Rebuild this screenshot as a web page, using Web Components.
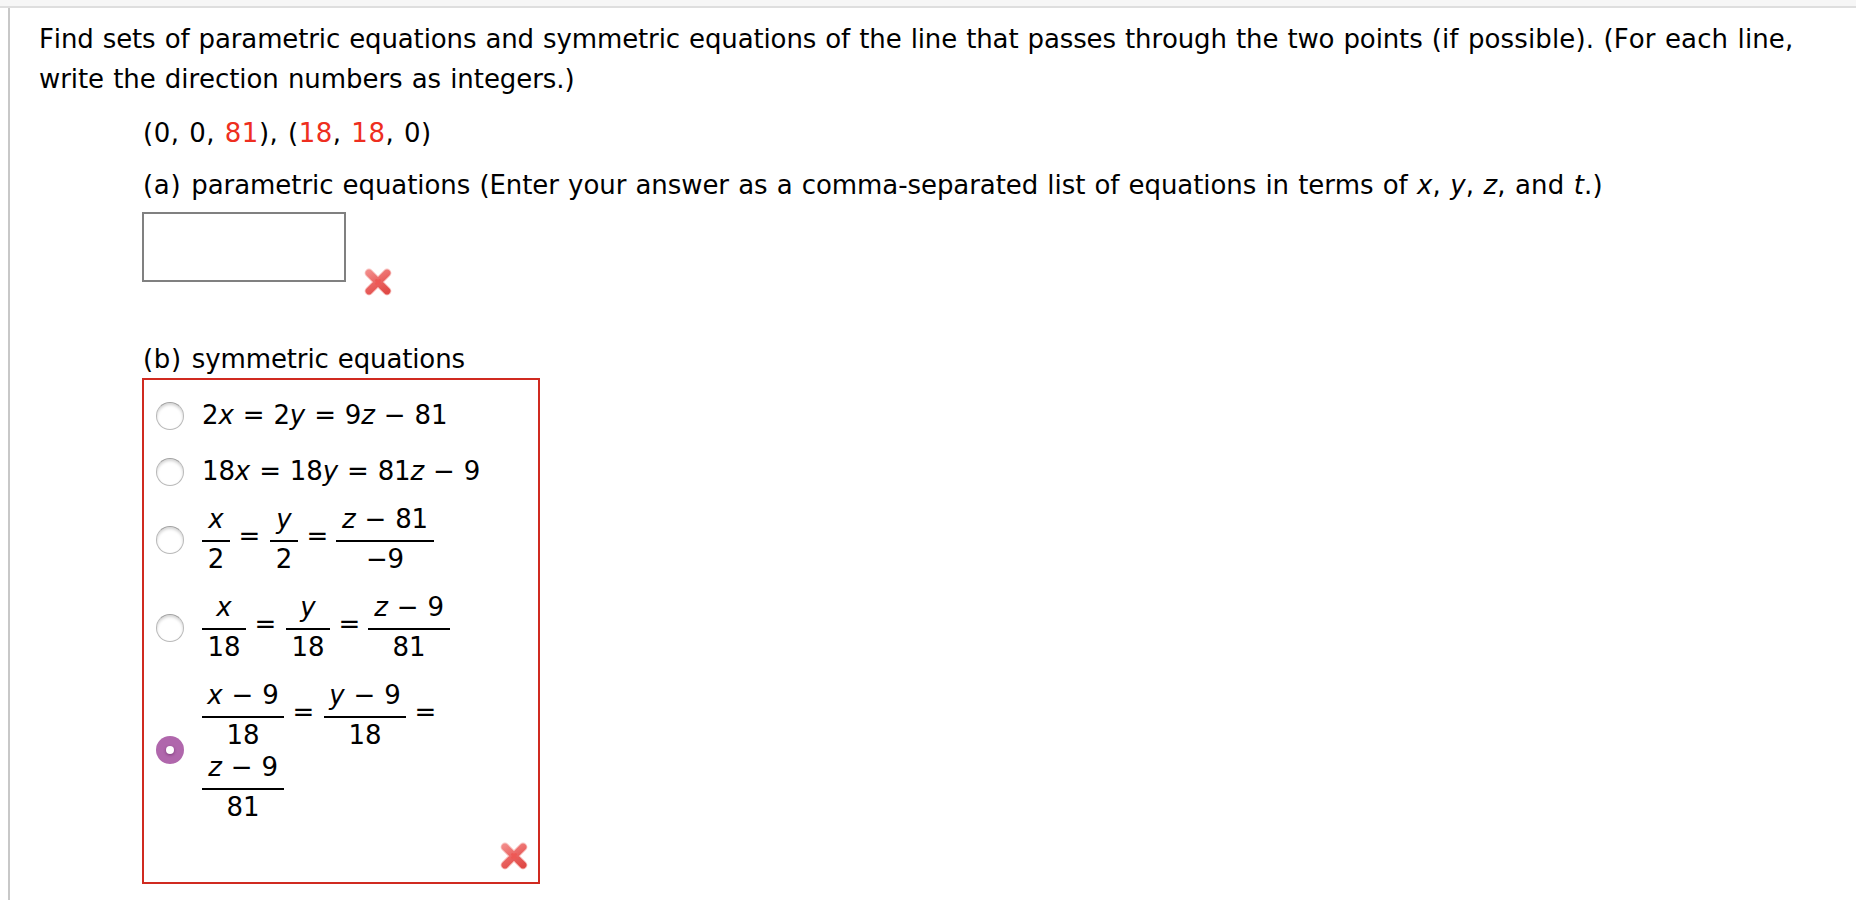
<!DOCTYPE html>
<html lang="en">
<head>
<meta charset="utf-8">
<title>Parametric and symmetric equations</title>
<style>
  body {
    margin: 0;
    background: #fff;
    color: #000;
    font-family: Verdana, "DejaVu Sans", sans-serif;
    font-size: 26px;
    font-kerning: none;
    overflow: hidden;
  }
</style>
</head>
<body>
<question-page></question-page>

<script>
class QuestionPage extends HTMLElement {
  constructor() {
    super();
    this.attachShadow({ mode: 'open' });
  }

  connectedCallback() {
    this.shadowRoot.innerHTML = `
      <style>
        :host { display: flex; flex-direction: column; height: 900px; }
        header {
          height: 6px;
          background: #f6f6f6;
          border-bottom: 2px solid #dedede;
        }
        main {
          flex: 1;
          margin-left: 8px;
          border-left: 2px solid #c8c8c8;
          padding: 11px 0 0 29px;
        }
        p {
          margin: 0;
          white-space: nowrap;
          line-height: 40px;
          letter-spacing: -0.13px;
          word-spacing: 1px;
        }
        .loose { letter-spacing: 0.12px; }
        .tag { letter-spacing: 0.7px; }
        .indent { padding-left: 104px; }
        .line-2 { letter-spacing: -0.07px; }
        .points { margin-top: 14px; letter-spacing: 0.5px; }
        .part-a { margin-top: 12px; letter-spacing: -0.07px; }
        .red { color: #ee2e20; }
        .answer { display: flex; padding-top: 7px; height: 127px; }
        .answer x-mark { margin: 55px 0 0 17px; }
        .box {
          box-sizing: border-box;
          width: 204px;
          height: 70px;
          margin-left: -1px;
          border: 2px solid #808080;
        }
        choice-list { margin: -1px 0 0 -1px; }
      </style>
      <header></header>
      <main>
        <p>Find sets of parametric equations and symmetric equations of the line that passes through the two points <span class="loose">(if possible). (For each line,</span></p>
        <p class="line-2">write the direction numbers as integers.)</p>
        <div class="indent">
          <p class="points">(0, 0, <span class="red">81</span>), (<span class="red">18</span>, <span class="red">18</span>, 0)</p>
          <p class="part-a"><span class="tag">(a) </span>parametric equations (Enter your answer as a comma-separated list of equations in terms of <span class="loose"><i>x</i>, <i>y</i>, <i>z</i>, and <i>t</i>.)</span></p>
          <div class="answer"><div class="box"></div><x-mark></x-mark></div>
          <p><span class="tag">(b) </span>symmetric equations</p>
          <choice-list>
            <choice-option style="--top: 20px; --nudge: 2px">2<i>x</i> = 2<i>y</i> = 9<i>z</i> − 81</choice-option>
            <choice-option style="--top: 26px; --nudge: 2px">18<i>x</i> = 18<i>y</i> = 81<i>z</i> − 9</choice-option>
            <choice-option style="--top: 18px">
              <math-row>
                <math-frac style="width: 28px"><i>x</i><span slot="den">2</span></math-frac><math-op>=</math-op>
                <math-frac style="width: 28px"><i>y</i><span slot="den">2</span></math-frac><math-op style="width: 38px">=</math-op>
                <math-frac style="width: 98px"><i>z</i> − 81<span slot="den">−9</span></math-frac>
              </math-row>
            </choice-option>
            <choice-option style="--top: 16px">
              <math-row>
                <math-frac style="width: 44px"><i>x</i><span slot="den">18</span></math-frac><math-op>=</math-op>
                <math-frac style="width: 44px"><i>y</i><span slot="den">18</span></math-frac><math-op style="width: 38px">=</math-op>
                <math-frac style="width: 82px"><i>z</i> − 9<span slot="den">81</span></math-frac>
              </math-row>
            </choice-option>
            <choice-option checked style="--top: 16px">
              <math-row>
                <math-frac style="width: 82px"><i>x</i> − 9<span slot="den">18</span></math-frac><math-op>=</math-op>
                <math-frac style="width: 82px"><i>y</i> − 9<span slot="den">18</span></math-frac><math-op>=</math-op>
              </math-row>
              <math-row>
                <math-frac style="width: 82px"><i>z</i> − 9<span slot="den">81</span></math-frac>
              </math-row>
            </choice-option>
            <x-mark slot="mark"></x-mark>
          </choice-list>
        </div>
      </main>
    `;
  }
}

// Red frame around the choices, with the grading mark in its corner
class ChoiceList extends HTMLElement {
  constructor() {
    super();
    this.attachShadow({ mode: 'open' });
  }

  connectedCallback() {
    this.shadowRoot.innerHTML = `
      <style>
        :host {
          display: flex;
          flex-direction: column;
          box-sizing: border-box;
          width: 398px;
          height: 506px;
          border: 2px solid #d02a20;
          padding: 0 9px 11px 12px;
        }
        .mark { display: flex; justify-content: flex-end; margin-top: auto; }
      </style>
      <slot></slot>
      <div class="mark"><slot name="mark"></slot></div>
    `;
  }
}

class ChoiceOption extends HTMLElement {
  constructor() {
    super();
    this.attachShadow({ mode: 'open' });
  }

  connectedCallback() {
    this.shadowRoot.innerHTML = `
      <style>
        :host {
          display: flex;
          align-items: center;
          gap: 18px;
          margin-top: var(--top);
        }
        .radio {
          box-sizing: border-box;
          flex: none;
          width: 28px;
          height: 28px;
          margin-top: var(--nudge, 0);
          border-radius: 50%;
          border: 1px solid #b9b9b9;
          border-top-color: #a2a2a2;
          background: #fff;
          box-shadow: inset 0 2px 3px rgba(0, 0, 0, 0.17);
        }
        :host([checked]) .radio {
          display: grid;
          place-items: center;
          margin-bottom: 4px;
          border: 0;
          background: #b067ac;
          box-shadow: none;
        }
        :host([checked]) .radio::after {
          content: "";
          width: 8px;
          height: 8px;
          border-radius: 50%;
          background: #fff;
          box-shadow: 0 1px 3px rgba(60, 0, 60, 0.45);
        }
        .label {
          line-height: 30px;
          white-space: nowrap;
          letter-spacing: -0.13px;
          word-spacing: 0.9px;
        }
      </style>
      <div class="radio"></div>
      <div class="label"><slot></slot></div>
    `;
  }
}

class MathRow extends HTMLElement {
  constructor() {
    super();
    this.attachShadow({ mode: 'open' });
    this.shadowRoot.innerHTML = `
      <style>:host { display: flex; height: 72px; }</style>
      <slot></slot>
    `;
  }
}

class MathOp extends HTMLElement {
  constructor() {
    super();
    this.attachShadow({ mode: 'open' });
    this.shadowRoot.innerHTML = `
      <style>
        :host { display: block; box-sizing: border-box; width: 40px; padding: 17px 0 0 8.5px; }
      </style>
      <slot></slot>
    `;
  }
}

// Usage: <math-frac>numerator<span slot="den">denominator</span></math-frac>
class MathFrac extends HTMLElement {
  constructor() {
    super();
    this.attachShadow({ mode: 'open' });
    this.shadowRoot.innerHTML = `
      <style>
        :host { display: block; text-align: center; }
        .num { height: 36px; border-bottom: 2px solid #000; }
        .den { padding-top: 2px; }
      </style>
      <div class="num"><slot></slot></div>
      <div class="den"><slot name="den"></slot></div>
    `;
  }
}

class XMark extends HTMLElement {
  constructor() {
    super();
    this.attachShadow({ mode: 'open' });
    this.shadowRoot.innerHTML = `
      <style>
        :host { display: block; width: 30px; height: 30px; }
        svg { display: block; }
      </style>
      <svg width="30" height="30" viewBox="0 0 30 30" fill="none" stroke-linecap="round">
        <defs>
          <linearGradient id="g" gradientUnits="userSpaceOnUse" x1="8" y1="3" x2="20" y2="27">
            <stop offset="0" stop-color="#f28a88"/>
            <stop offset="0.5" stop-color="#ea6462"/>
            <stop offset="1" stop-color="#e04a46"/>
          </linearGradient>
        </defs>
        <path d="M6 6L24 24M24 6L6 24" stroke="#f8c4c2" stroke-width="8.8"/>
        <path d="M6 6L24 24M24 6L6 24" stroke="url(#g)" stroke-width="6.8"/>
        <path d="M13.5 13.5L16.5 16.5M16.5 13.5L13.5 16.5" stroke="#ee5855" stroke-width="3"/>
      </svg>
    `;
  }
}

customElements.define('x-mark', XMark);
customElements.define('math-frac', MathFrac);
customElements.define('math-op', MathOp);
customElements.define('math-row', MathRow);
customElements.define('choice-option', ChoiceOption);
customElements.define('choice-list', ChoiceList);
customElements.define('question-page', QuestionPage);
</script>
</body>
</html>
